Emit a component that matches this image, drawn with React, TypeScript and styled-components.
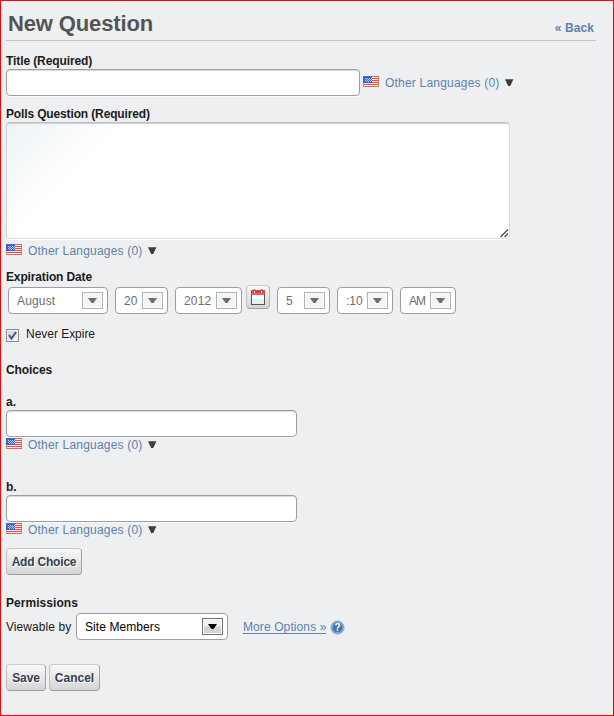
import React from "react";
import styled, { createGlobalStyle } from "styled-components";

const GlobalStyle = createGlobalStyle`
  *, *::before, *::after { box-sizing: border-box; }
  body { margin: 0; background: #eeeff1; }
  body, input, textarea, button {
    font-family: "Liberation Sans", Arial, sans-serif;
    font-size: 12px;
  }
`;

const Page = styled.form`
  width: 614px;
  height: 716px;
  padding: 0 5px;
  border: 1px solid #f00;
  background: #eeeff1;
  color: #1b1b1b;
  line-height: 15px;
  display: flex;
  flex-direction: column;
  align-items: flex-start;
`;

const Header = styled.header`
  width: 590px;
  height: 40px;
  padding: 0 2px;
  border-bottom: 1px solid #c4c5c7;
  display: flex;
  justify-content: space-between;
`;

const Heading = styled.h1`
  margin: 10px 0 0;
  font-size: 22px;
  line-height: 26px;
  letter-spacing: -0.14px;
  color: #545454;
`;

const BackLink = styled.a`
  margin-top: 20px;
  font-weight: bold;
  letter-spacing: 0.1px;
  color: #5b83ad;
  text-decoration: none;
`;

const Label = styled.label<{ $top: number; $track?: number }>`
  display: block;
  height: 15px;
  margin-top: ${(p) => p.$top}px;
  font-weight: bold;
  letter-spacing: ${(p) => p.$track ?? 0}px;
  white-space: nowrap;
`;

const Row = styled.div<{ $top?: number; $gap?: number }>`
  display: flex;
  align-items: flex-start;
  gap: ${(p) => p.$gap ?? 0}px;
  margin-top: ${(p) => p.$top ?? 0}px;
`;

const TextInput = styled.input<{ $width: number }>`
  display: block;
  width: ${(p) => p.$width}px;
  height: 27px;
  margin: 0;
  border: 1px solid #9c9ea1;
  border-radius: 4px;
  background: #fff;
  box-shadow: inset 0 1px 1px #d9d9d9, 0 1px 0 #f9f9f9;
  outline: none;
`;

const TextBox = styled.div`
  width: 504px;
  height: 117px;
  border: 1px solid;
  border-color: #bfbfbf #d9dadb #dedede #cfd0d1;
  border-radius: 4px;
  background: linear-gradient(135deg, #edf3f6 0, #fff 84px);
  box-shadow: inset 0 2px 1px -1px #cfcfcf, 0 1px 0 #fff;
  display: flex;
  align-items: flex-end;
  justify-content: flex-end;
`;

const TextArea = styled.textarea`
  flex: 1;
  height: 100%;
  padding: 4px;
  border: 0;
  background: transparent;
  resize: none;
  outline: none;
`;

const Languages = styled.div<{ $top?: number; $left?: number }>`
  display: flex;
  height: 16px;
  margin: ${(p) => p.$top ?? 0}px 0 0 ${(p) => p.$left ?? 0}px;
  color: #5b83ad;
  svg { display: block; flex: none; }
`;

const LanguageLink = styled.a`
  width: 115px;
  margin: 0 0 0 6px;
  letter-spacing: 0.2px;
  white-space: nowrap;
`;

const Caret = styled.svg`
  margin: 3px 0 0 5px;
`;

const SelectBox = styled.div<{ $width: number; $active?: boolean }>`
  width: ${(p) => p.$width}px;
  height: 27px;
  padding: 0 4px 0 8px;
  border: 1px solid #9c9ea1;
  border-radius: 4px;
  background: #fff;
  color: ${(p) => (p.$active ? "#000" : "#6d6d6d")};
  display: flex;
  align-items: center;
  justify-content: space-between;
`;

const SelectValue = styled.span<{ $track: number }>`
  padding-top: 2px;
  letter-spacing: ${(p) => p.$track}px;
  white-space: nowrap;
`;

const SelectArrow = styled.span<{ $active?: boolean }>`
  width: 21px;
  height: 17px;
  flex: none;
  border: 1px solid ${(p) => (p.$active ? "#707070" : "#adb2b5")};
  background: ${(p) => (p.$active ? "linear-gradient(#f2f2f2 48%, #d4d4d4 52%)" : "#f4f4f4")};
  box-shadow: inset 0 0 0 1px #fcfcfc;
  display: flex;
  align-items: center;
  justify-content: center;
`;

const Dates = styled.div`
  display: flex;
  height: 29px;
  margin: 0 0 0 2px;
  gap: 7px;
  align-items: flex-end;
`;

const CalendarButton = styled.button`
  width: 24px;
  height: 24px;
  margin: 0 0 5px -3px;
  padding: 0;
  border: 1px solid;
  border-color: #c8c9ca #b0b1b2 #9e9fa0 #c3c4c5;
  border-radius: 4px;
  background: linear-gradient(#f7f7f7, #d5d5d5);
  display: flex;
  align-items: center;
  justify-content: center;
`;

const Checkbox = styled.span`
  width: 13px;
  height: 13px;
  margin-top: 2px;
  border: 1px solid #8b8c8d;
  background: linear-gradient(135deg, #cdd1d6, #f6f6f6);
  box-shadow: inset 0 0 0 1px #f4f4f4;
  svg { display: block; }
`;

const Copy = styled.span<{ $track?: number }>`
  letter-spacing: ${(p) => p.$track ?? 0}px;
  white-space: nowrap;
`;

const Button = styled.button<{ $width: number; $track?: number }>`
  width: ${(p) => p.$width}px;
  height: 27px;
  padding: 0;
  border: 1px solid;
  border-color: #c8c9ca #a0a1a2 #9b9c9d #c0c1c2;
  border-radius: 4px;
  background: linear-gradient(#f8f8f8, #d5d5d5);
  color: #34404f;
  font-weight: bold;
  letter-spacing: ${(p) => p.$track ?? 0}px;
  text-shadow: 1px 1px #fff;
  white-space: nowrap;
`;

const Viewable = styled.div`
  display: flex;
  align-items: center;
  height: 27px;
  margin-top: 2px;
`;

const ViewableText = styled.span`
  width: 65px;
  padding-top: 2px;
  letter-spacing: 0.07px;
  white-space: nowrap;
`;

const SelectSlot = styled.div`
  margin-left: 5px;
`;

const MoreLink = styled.a`
  width: 83px;
  margin: 0 0 0 15px;
  height: 14px;
  line-height: 15px;
  border-bottom: 1px solid #5b83ad;
  color: #5b83ad;
  letter-spacing: 0.1px;
  white-space: nowrap;
`;

const HelpIcon = styled.svg`
  margin: 2px 0 0 4px;
`;

const HelpMark = styled.text`
  font: bold 10px "Liberation Sans", Arial, sans-serif;
`;

const Flag = () => (
  <svg width="16" height="11" shapeRendering="crispEdges">
    <rect width="16" height="11" fill="#fbeeee" />
    {[0, 2, 4, 6, 8, 10].map((y) => (
      <rect key={y} y={y} width="16" height="1" fill={y === 0 || y === 10 ? "#d2705e" : "#f4473f"} />
    ))}
    <rect x="15" width="1" height="11" fill="#d46a55" opacity=".75" />
    <rect y="7" width="1" height="4" fill="#d98b78" />
    <rect width="9" height="7" fill="#2f63dc" />
    <rect width="9" height="1" fill="#5268bd" />
    <rect width="1" height="7" fill="#5268bd" />
    {[[2, 2], [4, 2], [6, 2], [8, 2], [3, 3], [5, 3], [7, 3], [2, 4], [4, 4], [6, 4], [8, 4], [3, 5], [5, 5], [7, 5]].map(([x, y]) => (
      <rect key={`${x}-${y}`} x={x} y={y} width="1" height="1" fill="#b9cdfa" />
    ))}
  </svg>
);

const OtherLanguages = ({ top, left }: { top?: number; left?: number }) => (
  <Languages $top={top} $left={left}>
    <Flag />
    <LanguageLink>Other Languages (0)</LanguageLink>
    <Caret width="9" height="8">
      <path d="M0 0.3H8.4L5.2 7H3.2Z" fill="#3c3c3c" />
    </Caret>
  </Languages>
);

type SelectProps = { width: number; value: string; active?: boolean; track?: number };

const Select = ({ width, value, active, track = 0.15 }: SelectProps) => (
  <SelectBox $width={width} $active={active}>
    <SelectValue $track={track}>{value}</SelectValue>
    <SelectArrow $active={active}>
      <svg width="9" height="5">
        <path d="M0 0H9L5.5 5H3.5Z" fill={active ? "#000" : "#6d6e70"} />
      </svg>
    </SelectArrow>
  </SelectBox>
);

const CalendarIcon = () => (
  <svg width="14" height="16">
    <rect x="0.5" y="2.5" width="13" height="13" fill="#e4f1f1" stroke="#5a5454" />
    <rect x="1" y="6" width="12" height="4" fill="#fafdfd" />
    <path d="M0 1H14V6H0Z" fill="#dc4347" />
    <path d="M1 4H13V6H1Z" fill="#f06060" />
    <path d="M2.5 4V1.5Q2.5 .5 3.5 .5T4.5 1.5M9.5 4V1.5Q9.5 .5 10.5 .5T11.5 1.5" fill="none" stroke="#8c6464" />
    <path d="M3 2h1v2H3zM10 2h1v2h-1z" fill="#f3dcdc" />
  </svg>
);

const choices = [
  { name: "a.", top: 17 },
  { name: "b.", top: 26 },
];

export default function App() {
  return (
    <>
      <GlobalStyle />
      <Page>
        <Header>
          <Heading>New Question</Heading>
          <BackLink>« Back</BackLink>
        </Header>

        <Label $top={13} $track={-0.1}>Title (Required)</Label>
        <Row>
          <TextInput $width={354} />
          <OtherLanguages top={7} left={3} />
        </Row>

        <Label $top={11} $track={-0.14}>Polls Question (Required)</Label>
        <TextBox>
          <TextArea />
          <svg width="9" height="9">
            <path d="M0.5 8L8 .5M4.5 8L8 4.5" stroke="#444" strokeWidth="1.2" />
          </svg>
        </TextBox>
        <OtherLanguages top={5} />

        <Label $top={10} $track={-0.14}>Expiration Date</Label>
        <Dates>
          <Select width={100} value="August" />
          <Select width={53} value="20" />
          <Select width={67} value="2012" />
          <CalendarButton type="button" aria-label="Calendar"><CalendarIcon /></CalendarButton>
          <Select width={53} value="5" />
          <Select width={56} value=":10" track={0} />
          <Select width={56} value="AM" track={-1} />
        </Dates>
        <Row $top={13} $gap={7}>
          <Checkbox>
            <svg width="11" height="11">
              <path d="M2 5L4.5 8.5L9 2" fill="none" stroke="#42548c" strokeWidth="2" />
            </svg>
          </Checkbox>
          <Copy $track={-0.03}>Never Expire</Copy>
        </Row>

        <Label $top={21} $track={-0.08}>Choices</Label>
        {choices.map((choice) => (
          <React.Fragment key={choice.name}>
            <Label $top={choice.top}>{choice.name}</Label>
            <TextInput $width={291} />
            <OtherLanguages top={1} />
          </React.Fragment>
        ))}
        <Row $top={9}>
          <Button type="button" $width={76} $track={-0.2}>Add Choice</Button>
        </Row>

        <Label $top={21} $track={0.05}>Permissions</Label>
        <Viewable>
          <ViewableText>Viewable by</ViewableText>
          <SelectSlot><Select width={152} value="Site Members" active track={0.08} /></SelectSlot>
          <MoreLink>More Options »</MoreLink>
          <HelpIcon width="15" height="15">
            <circle cx="7.5" cy="7.5" r="6.7" fill="#6c96c6" stroke="#a9c2df" />
            <circle cx="7.5" cy="7.5" r="5.2" fill="#3f73b2" stroke="#9dbadb" strokeWidth=".7" />
            <HelpMark x="7.5" y="11" textAnchor="middle" fill="#fff">?</HelpMark>
          </HelpIcon>
        </Viewable>
        <Row $top={24} $gap={3}>
          <Button type="button" $width={40} $track={-0.1}>Save</Button>
          <Button type="button" $width={51}>Cancel</Button>
        </Row>
      </Page>
    </>
  );
}
